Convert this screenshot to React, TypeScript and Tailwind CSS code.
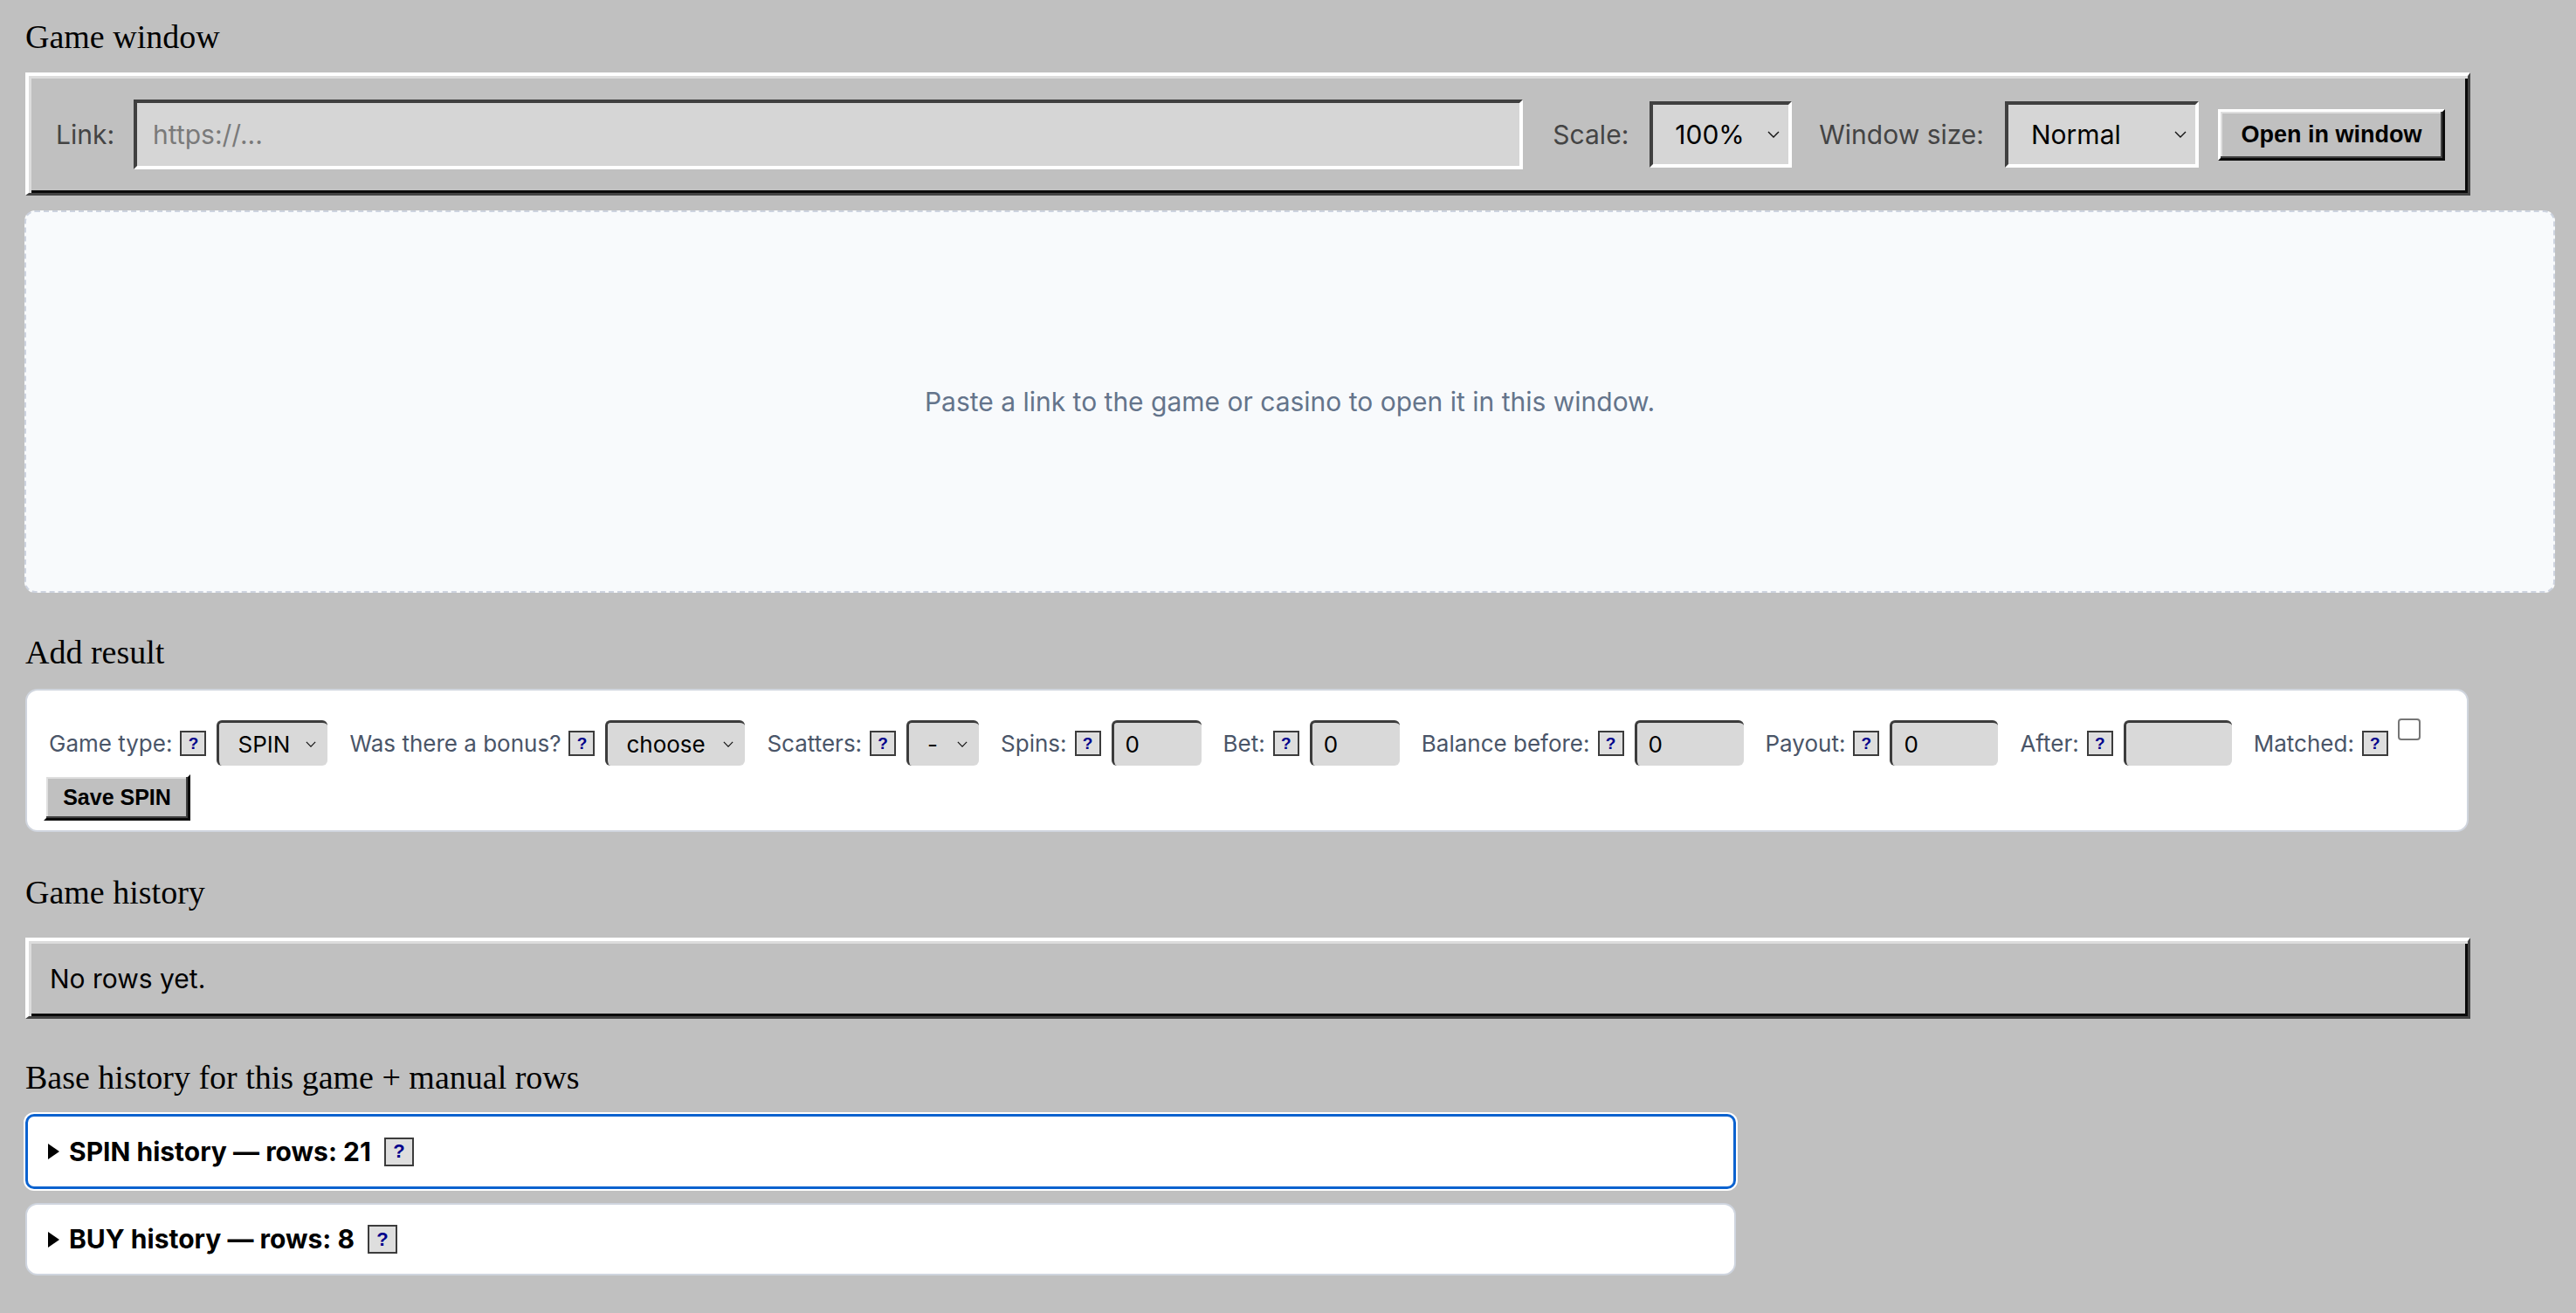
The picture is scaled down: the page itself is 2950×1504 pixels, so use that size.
import React from "react";

const Chevron = ({ w = 14, h = 8 }: { w?: number; h?: number }) => (
  <svg width={w} height={h} viewBox="0 0 14 8" fill="none" className="shrink-0">
    <path d="M1 1 L7 7 L13 1" stroke="#111" strokeWidth="1.4" />
  </svg>
);

const Help = ({ big = false }: { big?: boolean }) => (
  <span
    className={
      big
        ? "inline-flex h-[33px] w-[34px] shrink-0 items-center justify-center border-2 border-[#3c3c3c] bg-[#dedede] font-['Liberation_Sans',sans-serif] text-[22px] font-bold leading-none text-[#00008b]"
        : "inline-flex h-[29px] w-[30px] shrink-0 items-center justify-center border-2 border-[#3c3c3c] bg-[#dedede] font-['Liberation_Sans',sans-serif] text-[19px] font-bold leading-none text-[#00008b]"
    }
  >
    ?
  </span>
);

const FormSelect = ({ value, w }: { value: string; w: string }) => (
  <div
    className={`flex h-[52px] ${w} items-center justify-between rounded-[6px] border-t-[3px] border-l-[3px] border-t-[#3c3c3c] border-l-[#3c3c3c] bg-[#d9d9d9] pl-[21px] pr-[13px] text-[26px] text-black`}
  >
    <span>{value}</span>
    <Chevron w={12} h={7} />
  </div>
);

const FormInput = ({ value, w }: { value: string; w: string }) => (
  <div
    className={`flex h-[52px] ${w} items-center rounded-[6px] border-t-[3px] border-l-[3px] border-t-[#3c3c3c] border-l-[#3c3c3c] bg-[#d9d9d9] pl-[13px] text-[26px] text-black`}
  >
    {value}
  </div>
);

const Field = ({ label, children }: { label: string; children: React.ReactNode }) => (
  <div className="flex items-center">
    <span className="mr-[9px] text-[26px] text-[#4a5568]">{label}</span>
    <Help />
    <div className="ml-[12px]">{children}</div>
  </div>
);

const Triangle = () => (
  <svg width="15" height="18" viewBox="0 0 15 18" className="shrink-0">
    <path d="M1 0 L14 9 L1 18 Z" fill="#000" />
  </svg>
);

export default function App() {
  return (
    <div className="h-[1504px] w-full overflow-hidden bg-[#c0c0c0] pl-[29px] font-['Inter',sans-serif]">
      <h2 className="pt-[23px] font-['Liberation_Serif',serif] text-[38px] font-normal leading-[38px] text-black">
        Game window
      </h2>

      <div className="mt-[22px] flex h-[141px] w-[2800px] items-center border-t-[4px] border-l-[4px] border-b-[3px] border-r-[3px] border-t-white border-l-white border-b-[#444] border-r-[#444] bg-[#c0c0c0] pl-[31px] pr-[26px] shadow-[inset_3px_3px_0_#dcdcdc,inset_-3px_-3px_0_#0a0a0a]">
        <span className="text-[30px] text-[#444]">Link:</span>
        <div className="ml-[22px] flex h-[80px] flex-1 items-center border-[4px] border-t-[#404040] border-l-[#404040] border-b-white border-r-white bg-[#d6d6d6] pl-[18px] text-[30px] text-[#7a7a7a]">
          https://...
        </div>
        <span className="ml-[34px] text-[30px] text-[#444]">Scale:</span>
        <div className="ml-[24px] flex h-[76px] w-[163px] items-center justify-between border-[4px] border-t-[#404040] border-l-[#404040] border-b-white border-r-white bg-[#d6d6d6] pl-[25px] pr-[10px] text-[30px] text-black">
          <span>100%</span>
          <Chevron />
        </div>
        <span className="ml-[31px] text-[30px] text-[#444]">Window size:</span>
        <div className="ml-[24px] flex h-[76px] w-[222px] items-center justify-between border-[4px] border-t-[#404040] border-l-[#404040] border-b-white border-r-white bg-[#d6d6d6] pl-[26px] pr-[10px] text-[30px] text-black">
          <span>Normal</span>
          <Chevron />
        </div>
        <div className="ml-[22px] flex h-[59px] w-[260px] items-center justify-center border-[3px] border-t-white border-l-white border-b-[#0a0a0a] border-r-[#0a0a0a] bg-[#c0c0c0] font-['Liberation_Sans',sans-serif] text-[27px] font-bold text-black shadow-[inset_-2px_-2px_0_#404040,inset_2px_2px_0_#dfdfdf]">
          Open in window
        </div>
      </div>

      <div className="mt-[17px] flex h-[438px] w-[2898px] -translate-x-[1px] items-center justify-center rounded-[12px] border-[2px] border-dashed border-[#cdd3df] bg-[#f8fafc] text-[30px] text-[#64748b]">
        Paste a link to the game or casino to open it in this window.
      </div>

      <h2 className="mt-[49px] font-['Liberation_Serif',serif] text-[38px] font-normal leading-[38px] text-black">
        Add result
      </h2>

      <div className="mt-[23px] flex h-[164px] w-[2798px] flex-col rounded-[14px] border-[2px] border-[#d0d5de] bg-white pl-[19px] pt-[34px]">
        <div className="flex h-[52px] items-center gap-[25px] pl-[6px]">
          <Field label="Game type:">
            <FormSelect value="SPIN" w="w-[127px]" />
          </Field>
          <Field label="Was there a bonus?">
            <FormSelect value="choose" w="w-[160px]" />
          </Field>
          <Field label="Scatters:">
            <FormSelect value="-" w="w-[83px]" />
          </Field>
          <Field label="Spins:">
            <FormInput value="0" w="w-[103px]" />
          </Field>
          <Field label="Bet:">
            <FormInput value="0" w="w-[103px]" />
          </Field>
          <Field label="Balance before:">
            <FormInput value="0" w="w-[125px]" />
          </Field>
          <Field label="Payout:">
            <FormInput value="0" w="w-[124px]" />
          </Field>
          <Field label="After:">
            <FormInput value="" w="w-[124px]" />
          </Field>
          <div className="flex items-center">
            <span className="mr-[9px] text-[26px] text-[#4a5568]">Matched:</span>
            <Help />
            <span className="ml-[11px] h-[25px] w-[26px] -translate-y-[16px] rounded-[4px] border-[2px] border-[#767676] bg-white" />
          </div>
        </div>
        <div className="mt-[10px] flex h-[53px] w-[168px] items-center justify-center border-[3px] border-t-white border-l-white border-b-[#0a0a0a] border-r-[#0a0a0a] bg-[#c0c0c0] font-['Liberation_Sans',sans-serif] text-[25px] font-bold text-black shadow-[inset_-2px_-2px_0_#404040,inset_2px_2px_0_#dfdfdf]">
          Save SPIN
        </div>
      </div>

      <h2 className="mt-[50px] font-['Liberation_Serif',serif] text-[38px] font-normal leading-[38px] text-black">
        Game history
      </h2>

      <div className="mt-[33px] flex h-[93px] w-[2800px] items-center border-t-[4px] border-l-[4px] border-b-[3px] border-r-[3px] border-t-white border-l-white border-b-[#444] border-r-[#444] bg-[#c0c0c0] pl-[24px] shadow-[inset_3px_3px_0_#dcdcdc,inset_-3px_-3px_0_#0a0a0a]">
        <span className="text-[30px] text-black">No rows yet.</span>
      </div>

      <h2 className="mt-[48px] font-['Liberation_Serif',serif] text-[38px] font-normal leading-[38px] text-black">
        Base history for this game + manual rows
      </h2>

      <div className="mt-[23px] flex h-[86px] w-[1959px] items-center gap-[10px] rounded-[10px] border-[3px] border-[#0b62cf] bg-white pl-[22px] shadow-[0_0_0_2px_#ffffff]">
        <Triangle />
        <span className="text-[30px] font-bold text-black">SPIN history — rows: 21</span>
        <span className="ml-[5px] flex">
          <Help big />
        </span>
      </div>

      <div className="mt-[16px] flex h-[83px] w-[1959px] items-center gap-[10px] rounded-[14px] border-[2px] border-[#cfd5df] bg-white pl-[23px]">
        <Triangle />
        <span className="text-[30px] font-bold text-black">BUY history — rows: 8</span>
        <span className="ml-[5px] flex">
          <Help big />
        </span>
      </div>
    </div>
  );
}
